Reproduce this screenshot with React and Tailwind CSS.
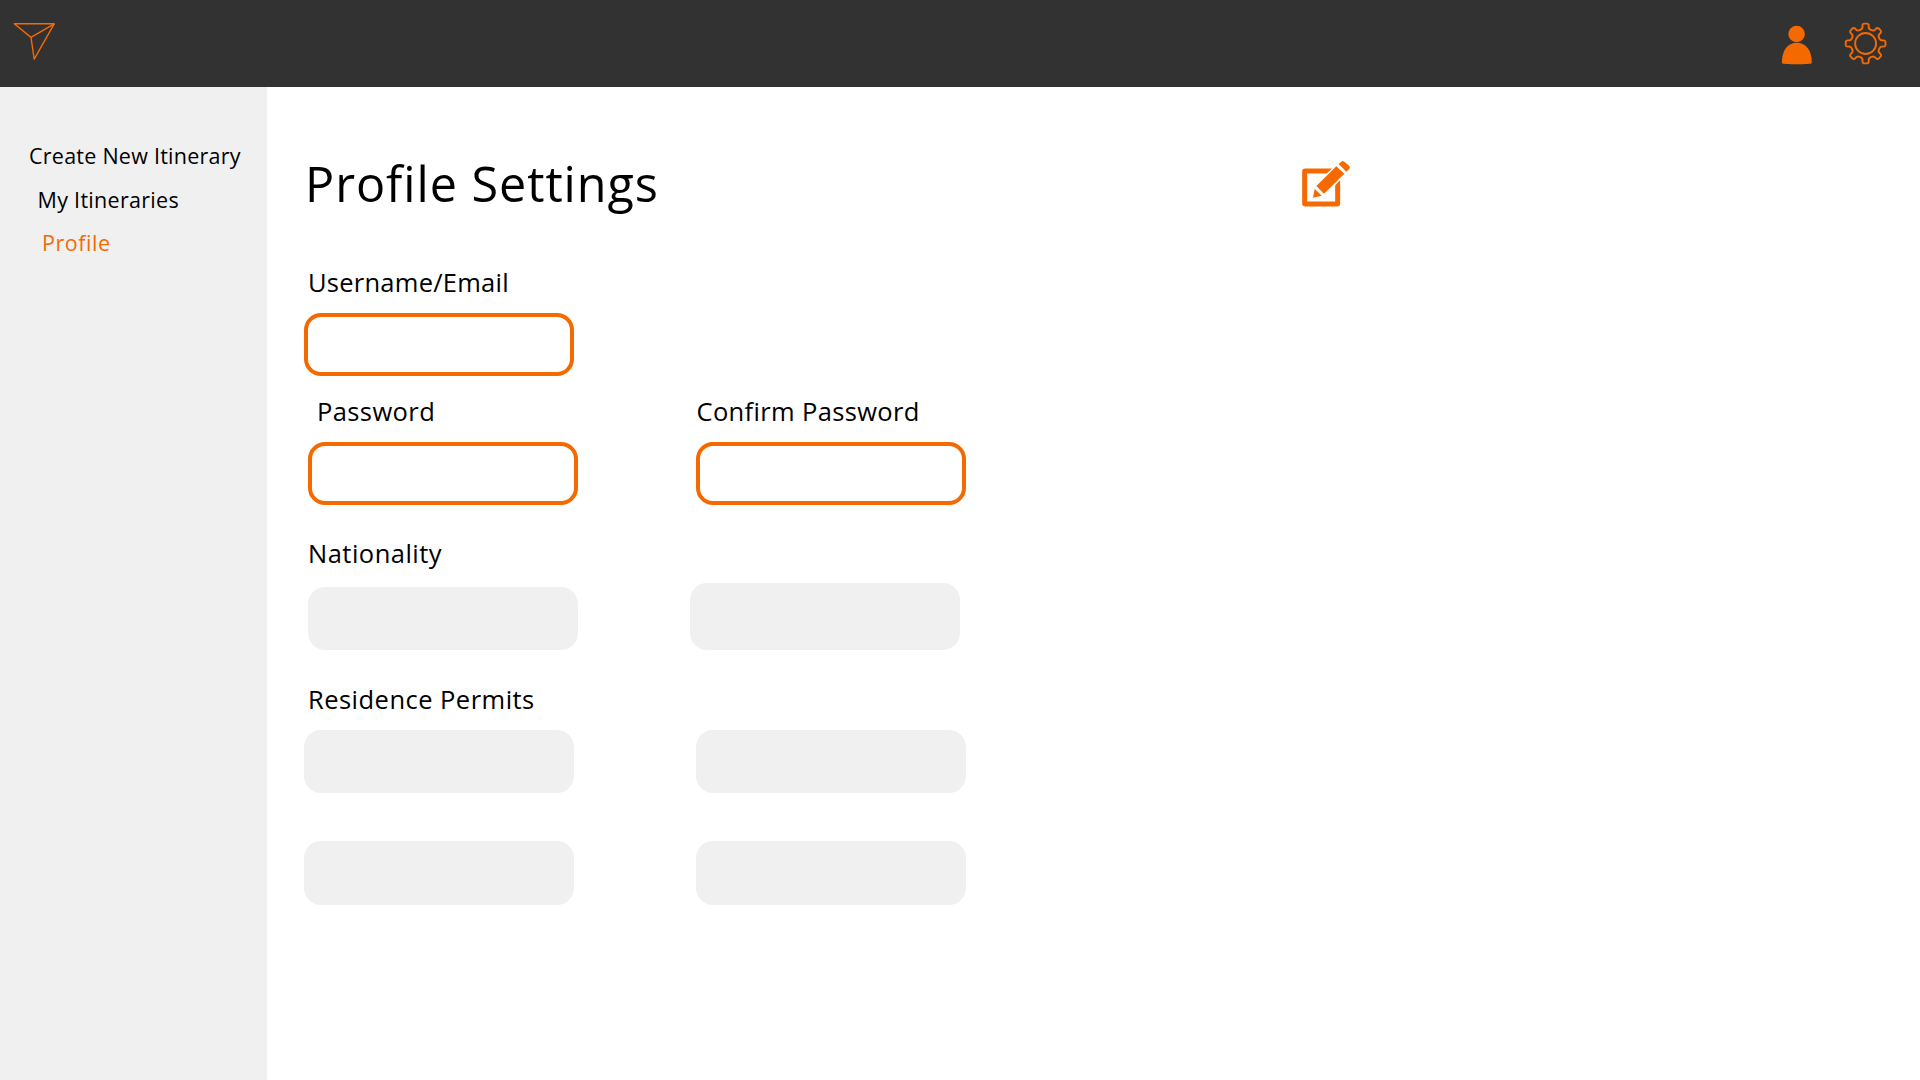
import React from "react";

const ORANGE = "#f46a00";

// Outline of an eight-toothed gear with softened corners, centred on 0,0.
function gearPath() {
  const pts = [];
  for (let k = 0; k < 8; k++) {
    const a = (k * Math.PI) / 4;
    for (const [u, r] of [[-2.9, 14.6], [-3.3, 19.9], [3.3, 19.9], [2.9, 14.6]]) {
      pts.push([u * Math.cos(a) + r * Math.sin(a), u * Math.sin(a) - r * Math.cos(a)]);
    }
  }
  const toward = (p, q, d) => {
    const len = Math.hypot(q[0] - p[0], q[1] - p[1]);
    const t = Math.min(d / len, 0.5);
    return [p[0] + (q[0] - p[0]) * t, p[1] + (q[1] - p[1]) * t];
  };
  const f = (p) => `${p[0].toFixed(2)} ${p[1].toFixed(2)}`;
  return (
    pts
      .map((p, i) => {
        const prev = pts[(i + pts.length - 1) % pts.length];
        const next = pts[(i + 1) % pts.length];
        return `${i ? "L" : "M"}${f(toward(p, prev, 2.4))}Q${f(p)} ${f(toward(p, next, 2.4))}`;
      })
      .join("") + "Z"
  );
}

const GEAR = gearPath();

function PlaneLogo() {
  return (
    <svg className="ml-3 mt-5 h-11 w-11" viewBox="12 20 44 44" fill="none" stroke={ORANGE} strokeWidth="1.4" strokeLinejoin="round">
      <path d="M14.3 23.8H54.2L34.2 59.2L31 37.4Z" />
      <path d="M31 37.4L54.2 23.8" />
    </svg>
  );
}

function PersonIcon() {
  return (
    <svg className="h-10 w-8" viewBox="0 0 32 40" fill={ORANGE}>
      <circle cx="15.6" cy="9" r="8.3" />
      <path d="M0.9 37.2C0.9 25.5 6.8 17.8 15.8 17.8S30.8 25.5 30.8 37.2C30.8 38.2 30.4 38.6 29.2 38.8C24.5 39.4 7.2 39.4 2.5 38.8C1.3 38.6 0.9 38.2 0.9 37.2Z" />
    </svg>
  );
}

function GearIcon() {
  return (
    <svg className="h-11 w-11" viewBox="-21.6 -21.5 44 44" fill="none" stroke={ORANGE} strokeWidth="1.9">
      <path d={GEAR} />
      <circle r="10.5" />
    </svg>
  );
}

function EditIcon() {
  return (
    <svg className="h-[50px] w-[52px]" viewBox="60 54 156 150" fill={ORANGE}>
      <rect x="74" y="93" width="99" height="99" rx="2" fill="none" stroke={ORANGE} strokeWidth="15" strokeLinejoin="round" />
      <path d="M98 173L107 138L187 62L211 82L132 165Z" fill="#fff" stroke="#fff" strokeWidth="9" />
      <path d="M99 173L104 146L125 167Z" />
      <path d="M109 138L169 79L193 101L132 161Z" />
      <path d="M176 72L184 65Q188 61 193 65L208 78Q212 82 208 87L199 95Z" />
    </svg>
  );
}

const FIELD_BASE = "block w-[270px] rounded-[17px] outline-none px-4 text-xl";

function Field({ label, outlined, className }) {
  return (
    <input
      aria-label={label}
      className={`${FIELD_BASE} ${outlined ? "border-4 border-[#f46a00] bg-white" : "bg-[#f0f0f0]"} ${className}`}
    />
  );
}

function Label({ children, className }) {
  return <div className={`h-8 whitespace-nowrap text-[25.5px] leading-8 ${className}`}>{children}</div>;
}

export default function App() {
  return (
    <div className="flex h-screen w-full flex-col overflow-hidden bg-white font-['Open_Sans',sans-serif] text-black">
      <header className="flex h-[87px] shrink-0 items-start justify-between bg-[#323232]">
        <PlaneLogo />
        <div className="flex items-start gap-[31px] pr-8 pt-[22px]">
          <div className="pt-[3px]">
            <PersonIcon />
          </div>
          <GearIcon />
        </div>
      </header>

      <div className="flex min-h-0 flex-1">
        <aside className="w-[267px] shrink-0 bg-[#f0f0f0] pt-[54px]">
          <nav className="flex flex-col gap-[13.5px] whitespace-nowrap text-[21.5px] leading-[30px]">
            <a className="pl-[29px] tracking-[0.25px]">Create New Itinerary</a>
            <a className="pl-[37.5px] tracking-[0.3px]">My Itineraries</a>
            <a className="pl-[42px] tracking-[0.55px] text-[#f46a00]">Profile</a>
          </nav>
        </aside>

        <main className="flex-1 pl-[37px] pt-[65px]">
          <div className="flex h-[60px] w-[1048px] items-start justify-between pl-px">
            <h1 className="pt-px text-[48.5px] leading-[60px] tracking-[0.95px]">Profile Settings</h1>
            <div className="pt-1.5">
              <EditIcon />
            </div>
          </div>

          <section className="mt-[54px]">
            <Label className="pl-1 tracking-[0.25px]">Username/Email</Label>
            <Field label="Username/Email" outlined className="mt-[15px] h-[63px]" />
          </section>

          <section className="mt-[19px] flex gap-[118px] pl-1">
            <div>
              <Label className="pl-[9px] tracking-[0.4px]">Password</Label>
              <Field label="Password" outlined className="mt-[15px] h-[63px]" />
            </div>
            <div>
              <Label className="pl-[0.5px] tracking-[0.35px]">Confirm Password</Label>
              <Field label="Confirm Password" outlined className="mt-[15px] h-[63px]" />
            </div>
          </section>

          <section className="mt-8 pl-1">
            <Label className="tracking-[0.48px]">Nationality</Label>
            <div className="mt-3.5 flex items-end gap-28">
              <Field label="Nationality" className="h-[63px]" />
              <Field label="Second nationality" className="h-[67px]" />
            </div>
          </section>

          <section className="mt-[33px]">
            <Label className="pl-1 tracking-[0.47px]">Residence Permits</Label>
            <div className="mt-[15px] flex gap-[122px]">
              <Field label="Residence permit 1" className="h-[63px]" />
              <Field label="Residence permit 2" className="h-[63px]" />
            </div>
            <div className="mt-12 flex gap-[122px]">
              <Field label="Residence permit 3" className="h-16" />
              <Field label="Residence permit 4" className="h-16" />
            </div>
          </section>
        </main>
      </div>
    </div>
  );
}
